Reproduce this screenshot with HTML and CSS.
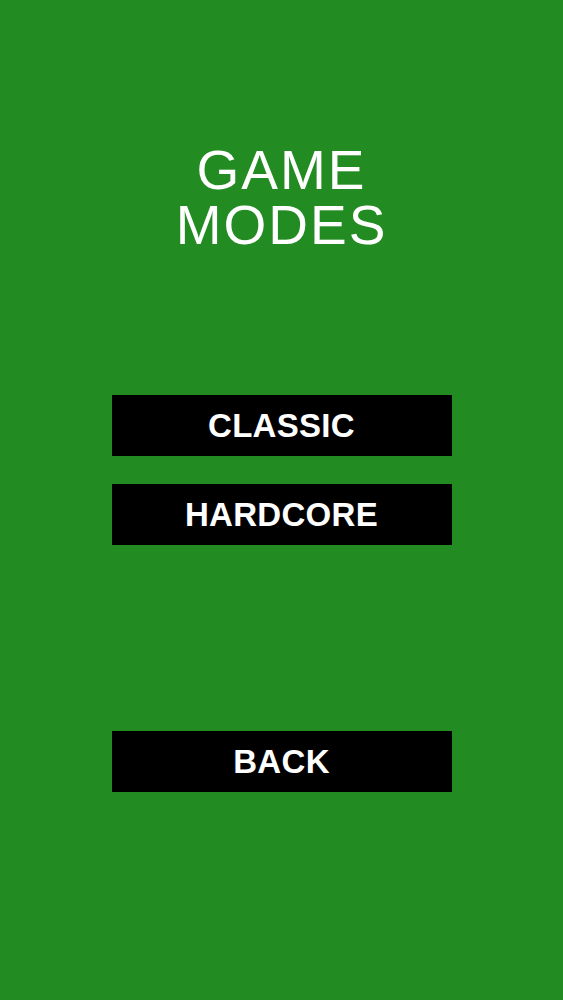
FILE: index.html
```html
<!DOCTYPE html>
<html>
<head>
<meta charset="utf-8">
<link rel="stylesheet" href="styles.css">
</head>
<body>
<div class="screen">
  <h1 class="title"><span class="line">GAME</span><span class="line">MODES</span></h1>
  <div class="modes">
    <button class="btn">CLASSIC</button>
    <button class="btn">HARDCORE</button>
  </div>
  <button class="btn back">BACK</button>
</div>
</body>
</html>
```
FILE: styles.css
```css
html, body {
  margin: 0;
  padding: 0;
  background: #228b22;
}
.screen {
  width: 563px;
  height: 1000px;
  display: flex;
  flex-direction: column;
  align-items: center;
  font-family: "Liberation Sans", Arial, sans-serif;
  color: #fff;
}
.title {
  margin: 143px 0 0 0;
  font-size: 55px;
  font-weight: normal;
  line-height: 55px;
  letter-spacing: 2px;
  text-align: center;
  display: flex;
  flex-direction: column;
  align-items: center;
}
.line {
  display: block;
  height: 55px;
}
.modes {
  margin-top: 142px;
  display: flex;
  flex-direction: column;
  gap: 28px;
}
.btn {
  width: 340px;
  height: 61px;
  background: #000;
  color: #fff;
  border: none;
  padding: 0;
  font-family: "Liberation Sans", Arial, sans-serif;
  font-weight: bold;
  font-size: 33px;
  letter-spacing: 0.3px;
  display: flex;
  align-items: center;
  justify-content: center;
}
.back {
  margin-top: 186px;
}
```
